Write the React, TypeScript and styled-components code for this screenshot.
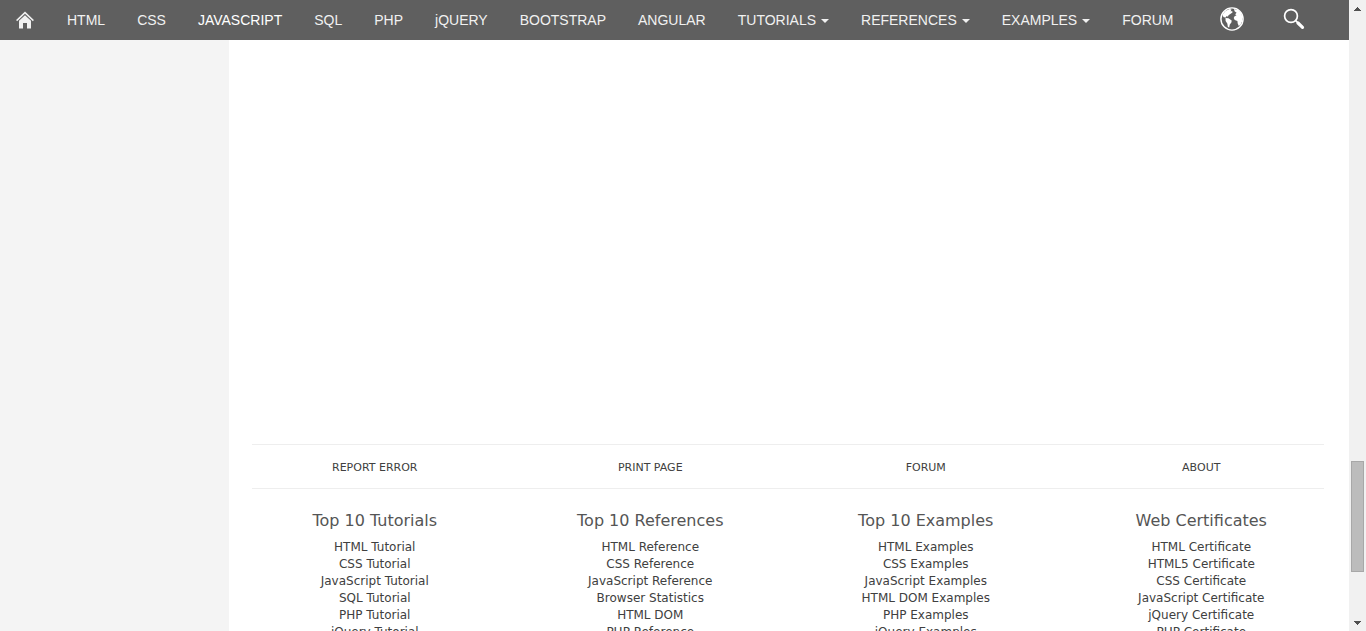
import React from "react";
import styled, { createGlobalStyle } from "styled-components";

const GlobalStyle = createGlobalStyle`
  *, *::before, *::after { box-sizing: border-box; }
  body { margin: 0; background: #fff; overflow: hidden; }
`;

const Shell = styled.div`
  display: flex;
  height: 100vh;
  overflow: hidden;
  font-family: Verdana, "DejaVu Sans", sans-serif;
`;

const Page = styled.div`
  flex: 1;
  min-width: 0;
  display: flex;
  flex-direction: column;
`;

const TopNav = styled.nav`
  flex: none;
  display: flex;
  align-items: stretch;
  height: 40px;
  padding-right: 24px;
  background: #5f5f5f;
  font-family: "Liberation Sans", Arial, sans-serif;
  font-size: 14px;
  line-height: 40px;
`;

const NavLink = styled.a<{ $active?: boolean }>`
  display: flex;
  align-items: center;
  gap: 5px;
  padding: 0 16px;
  color: ${(p) => (p.$active ? "#fff" : "#f1f1f1")};
  text-decoration: none;
  white-space: nowrap;
`;

const Caret = styled.span`
  border: 4px solid transparent;
  border-top-color: currentColor;
  border-bottom: 0;
  margin-top: 2px;
`;

const NavTools = styled.div`
  display: flex;
  margin-left: auto;
`;

const ToolButton = styled.button`
  display: flex;
  align-items: center;
  justify-content: center;
  width: 62px;
  padding: 0 0 2px;
  border: 0;
  background: none;
  color: #fff;
`;

const Body = styled.div`
  flex: 1;
  min-height: 0;
  display: flex;
`;

const Sidebar = styled.aside`
  flex: none;
  width: 229px;
  background: #f4f4f4;
`;

const Main = styled.main`
  flex: 1;
  min-width: 0;
  padding: 404px 25px 0 23px;
  overflow: hidden;
`;

const LinkBar = styled.div`
  border: solid #eee;
  border-width: 1px 0;
`;

const Columns = styled.div`
  display: grid;
  grid-template-columns: repeat(4, 1fr);
  margin: 0 -15px;
  text-align: center;
`;

const BarLink = styled.a`
  justify-self: center;
  padding-top: 2px;
  color: #404040;
  font-size: 11px;
  line-height: 41px;
  text-decoration: none;
`;

const Group = styled.section`
  padding-top: 20px;
`;

const GroupTitle = styled.h2`
  margin: 0 0 7px;
  color: #555;
  font-size: 16px;
  font-weight: 400;
  line-height: 23px;
`;

const LinkList = styled.ul`
  margin: 0;
  padding: 0;
  list-style: none;
  font-size: 12px;
  line-height: 17px;
`;

const ListLink = styled.a`
  color: #404040;
  text-decoration: none;
`;

const ScrollTrack = styled.div`
  flex: none;
  display: flex;
  flex-direction: column;
  align-items: center;
  justify-content: space-between;
  width: 17px;
  background: #f1f1f1;
`;

const ScrollButton = styled.button`
  display: flex;
  align-items: center;
  justify-content: center;
  width: 17px;
  height: 17px;
  padding: 0;
  border: 0;
  background: none;
`;

const ScrollRail = styled.div`
  flex: 1;
  display: grid;
  grid-template-rows: 444fr 111fr 42fr;
`;

const ScrollThumb = styled.div`
  grid-row: 2;
  width: 13px;
  background: #bcbcbc;
  border: 1px solid #a8a8a8;
`;

type NavItem = { label: string; menu?: boolean; active?: boolean };

const navItems: NavItem[] = [
  { label: "HTML" },
  { label: "CSS" },
  { label: "JAVASCRIPT", active: true },
  { label: "SQL" },
  { label: "PHP" },
  { label: "jQUERY" },
  { label: "BOOTSTRAP" },
  { label: "ANGULAR" },
  { label: "TUTORIALS", menu: true },
  { label: "REFERENCES", menu: true },
  { label: "EXAMPLES", menu: true },
  { label: "FORUM" },
];

const barLinks = ["REPORT ERROR", "PRINT PAGE", "FORUM", "ABOUT"];

const groups = [
  {
    title: "Top 10 Tutorials",
    links: ["HTML Tutorial", "CSS Tutorial", "JavaScript Tutorial", "SQL Tutorial", "PHP Tutorial", "jQuery Tutorial"],
  },
  {
    title: "Top 10 References",
    links: ["HTML Reference", "CSS Reference", "JavaScript Reference", "Browser Statistics", "HTML DOM", "PHP Reference"],
  },
  {
    title: "Top 10 Examples",
    links: ["HTML Examples", "CSS Examples", "JavaScript Examples", "HTML DOM Examples", "PHP Examples", "jQuery Examples"],
  },
  {
    title: "Web Certificates",
    links: ["HTML Certificate", "HTML5 Certificate", "CSS Certificate", "JavaScript Certificate", "jQuery Certificate", "PHP Certificate"],
  },
];

const HomeIcon = () => (
  <svg width="19" height="18" viewBox="0 0 19 18" aria-hidden="true">
    <path d="M0.600 9.600 9 1.600 17.400 9.600" fill="none" stroke="#f1f1f1" strokeWidth="1.500" />
    <path d="M3 9.800 9 4.200 15 9.800V17.500H11V12H7V17.500H3z" fill="#f1f1f1" />
  </svg>
);

const GlobeIcon = () => (
  <svg width="24" height="24" viewBox="0 0 24 24" aria-hidden="true" fill="#fff">
    <circle cx="12" cy="12" r="11.100" fill="none" stroke="#fff" strokeWidth="1.400" />
    <path d="M2.500 7.500 5.500 4 9.500 2 11.500 2.500 10.500 4.500 12.200 4 12.500 5.500 10.300 7 8.500 8.300 8 9.600 6.200 9.300 5.800 10.600 3.800 10.300 2.800 9z" />
    <path d="M5.500 11 8.500 11.200 11.700 13.500 11.400 15.500 9.800 17.500 9.200 20.500 7.900 20 7.300 16.500 5.600 14z" />
    <path d="M14 2 18 3 21 6 22.500 10 22.300 14 20.500 17.800 18.800 19 17.700 16.500 17.400 14 14.700 13 13.700 11 14.800 9 16.500 8.400 15.200 7.200 16.600 5.700 14.600 4.300z" />
  </svg>
);

const SearchIcon = () => (
  <svg width="22" height="22" viewBox="0 0 22 22" aria-hidden="true" fill="none" stroke="#fff">
    <circle cx="8" cy="8" r="6.400" strokeWidth="1.700" />
    <path d="M12.700 12.700 15 15" strokeWidth="1.700" />
    <path d="M15 15 19.500 19.300" strokeWidth="3.200" strokeLinecap="round" />
  </svg>
);

const ScrollArrow = ({ down }: { down?: boolean }) => (
  <svg width="7" height="4" viewBox="0 0 7 4" aria-hidden="true" shapeRendering="crispEdges">
    <path d={down ? "M0 0h7L3.500 4z" : "M0 4h7L3.500 0z"} fill="#505050" />
  </svg>
);

export default function App() {
  return (
    <Shell>
      <GlobalStyle />
      <Page>
        <TopNav>
          <NavLink href="#home" aria-label="Home">
            <HomeIcon />
          </NavLink>
          {navItems.map((item) => (
            <NavLink key={item.label} href="#" $active={item.active}>
              {item.label}
              {item.menu && <Caret />}
            </NavLink>
          ))}
          <NavTools>
            <ToolButton type="button" aria-label="Translate">
              <GlobeIcon />
            </ToolButton>
            <ToolButton type="button" aria-label="Search">
              <SearchIcon />
            </ToolButton>
          </NavTools>
        </TopNav>
        <Body>
          <Sidebar />
          <Main>
            <LinkBar>
              <Columns>
                {barLinks.map((label) => (
                  <BarLink key={label} href="#">
                    {label}
                  </BarLink>
                ))}
              </Columns>
            </LinkBar>
            <Columns>
              {groups.map((group) => (
                <Group key={group.title}>
                  <GroupTitle>{group.title}</GroupTitle>
                  <LinkList>
                    {group.links.map((link) => (
                      <li key={link}>
                        <ListLink href="#">{link}</ListLink>
                      </li>
                    ))}
                  </LinkList>
                </Group>
              ))}
            </Columns>
          </Main>
        </Body>
      </Page>
      <ScrollTrack>
        <ScrollButton type="button" aria-label="Scroll up">
          <ScrollArrow />
        </ScrollButton>
        <ScrollRail>
          <ScrollThumb />
        </ScrollRail>
        <ScrollButton type="button" aria-label="Scroll down">
          <ScrollArrow down />
        </ScrollButton>
      </ScrollTrack>
    </Shell>
  );
}
